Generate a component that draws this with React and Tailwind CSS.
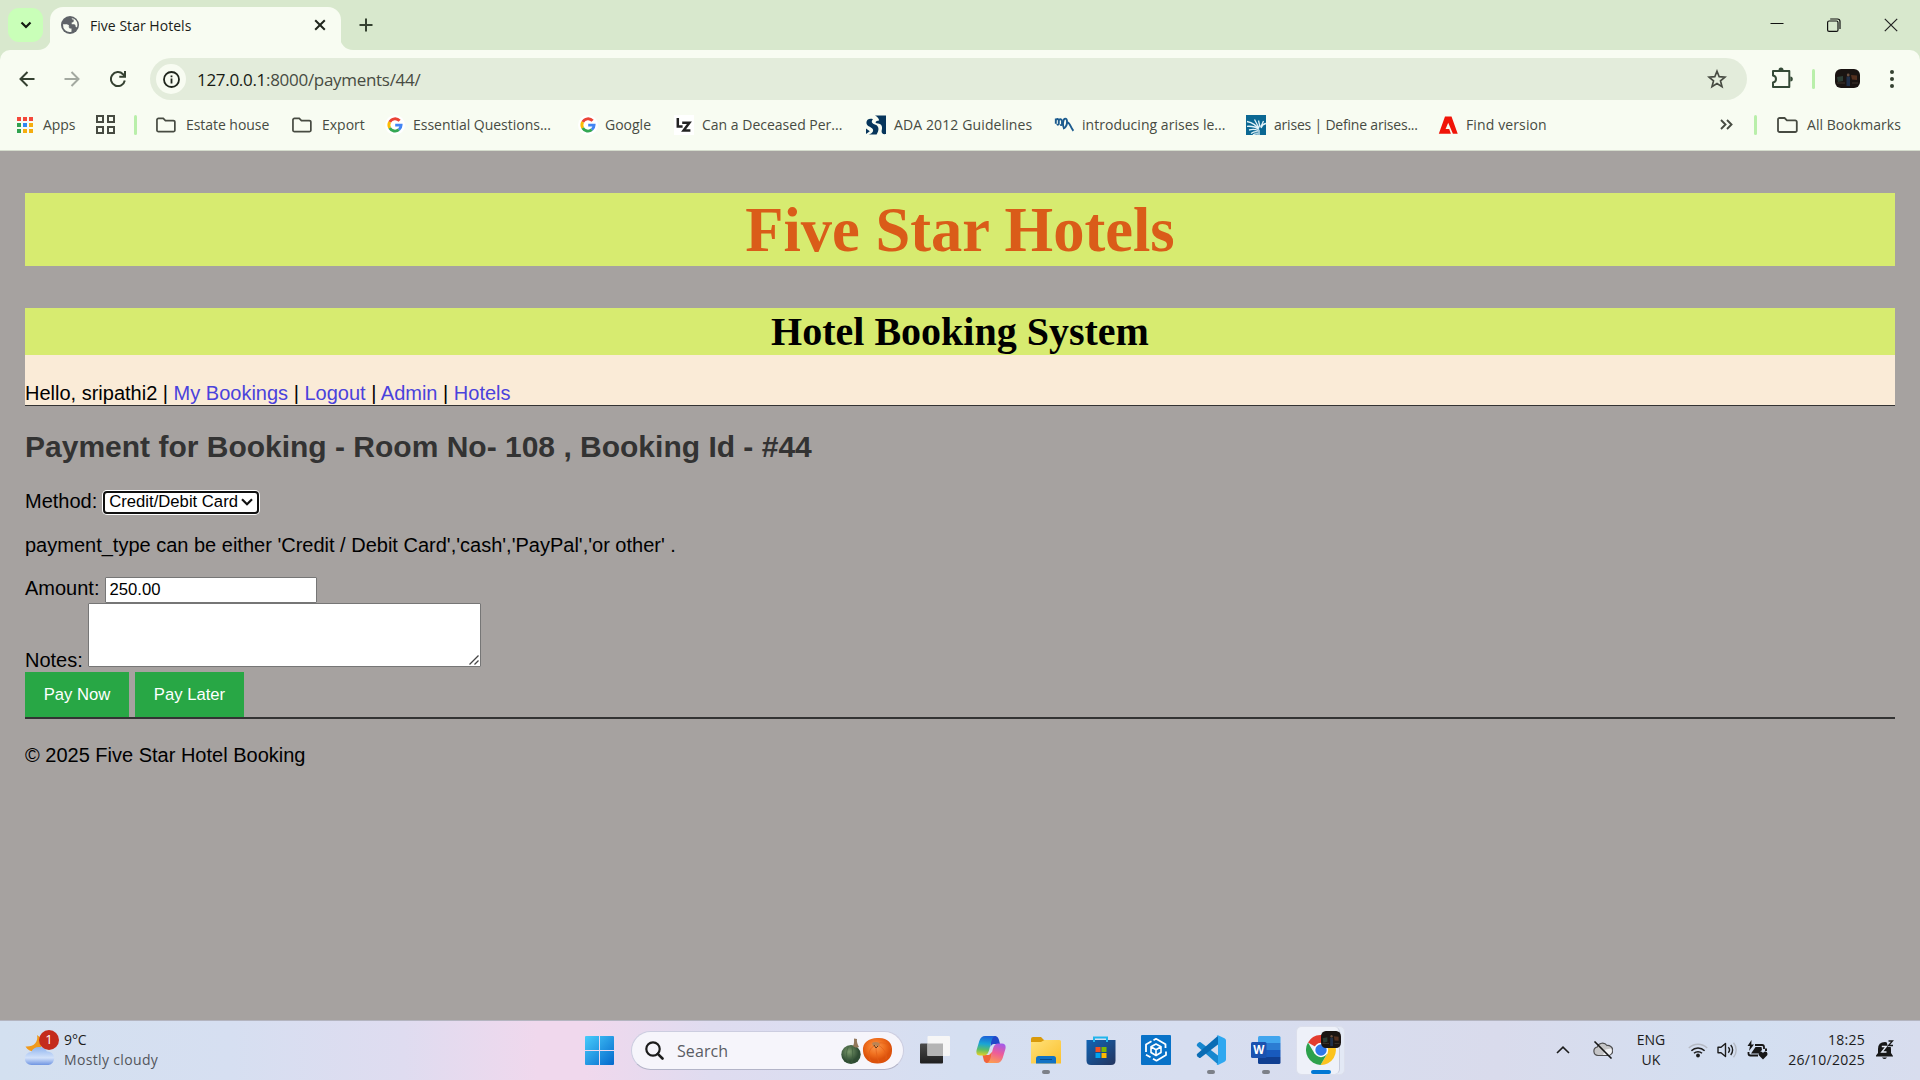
import React from "react";

const ui = "font-['Open_Sans','Noto_Sans',sans-serif]";

function Folder() {
  return (
    <svg width="21" height="16" viewBox="0 0 21 16" fill="none" stroke="#474b42" strokeWidth="1.8">
      <path d="M1 2.6A1.6 1.6 0 0 1 2.6 1H7.6L9.9 3.3H18.2A1.6 1.6 0 0 1 19.8 4.9V13.4A1.6 1.6 0 0 1 18.2 15H2.6A1.6 1.6 0 0 1 1 13.4Z" />
    </svg>
  );
}

function GoogleG() {
  return (
    <svg width="20" height="20" viewBox="0 0 20 20">
      <circle cx="10" cy="10" r="10" fill="#fff" />
      <g fill="none" strokeWidth="2.9">
        <path d="M14.6 5.8A6.1 6.1 0 0 0 4.7 7" stroke="#ea4335" />
        <path d="M4.7 7A6.1 6.1 0 0 0 4.7 13" stroke="#fbbc05" />
        <path d="M4.7 13A6.1 6.1 0 0 0 13.9 14.7" stroke="#34a853" />
        <path d="M13.9 14.7A6 6 0 0 0 16.1 10.1H10.2" stroke="#4285f4" />
      </g>
    </svg>
  );
}

function LzIcon() {
  return (
    <svg width="20" height="20" viewBox="0 0 20 20">
      <rect width="20" height="20" fill="#fff" />
      <path d="M3.8 3V11.6H8.6M8.2 7.8H15.4L9.6 15.4H16.4" fill="none" stroke="#222" strokeWidth="2.5" />
    </svg>
  );
}

function AdaIcon() {
  return (
    <svg width="20" height="20" viewBox="0 0 20 20" fill="#06355b">
      <path d="M9 .4H20V19C17 19.600 15.400 18.500 15.600 16C17 11.500 15.500 9 12 8.600C8 8.500 9.500 5.500 13.200 5.600C12.800 3 11.500 1.800 9 .4Z" />
      <path d="M.4 8C.2 4.600 3.500 3 7 4.200C4.800 6.500 5.700 8.500 9.500 9.800C13 11 13.500 15 10.600 19.600H2.500C5.500 18.800 8 16.500 6.800 14.200C5.200 11.500 1 12 .4 8Z" />
      <path d="M0 13.400L3.800 16.200L0 19Z" />
    </svg>
  );
}

function MhIcon() {
  return (
    <svg width="20" height="20" viewBox="0 0 20 20" fill="none" stroke="#1c5b8e" strokeWidth="1.900">
      <path d="M1.800 3.500V8.800M2 4.800C3.500 3.400 4.800 4 4.800 5.500V8.500C4.600 10.300 3.200 10 3.400 8.800M4.800 5.200C6.500 3.500 8 4.200 8 6V9C8 10.500 6.600 10.500 6.600 9.300" />
      <path d="M9.800 12.800C8.300 10 9 3.600 11.300 3.600C13.600 3.600 13.500 9 11.800 11.600C11 13 10 13.500 9 13.500M13.600 7.500C16 7.800 16.500 12.500 19.400 15.800" />
    </svg>
  );
}

function ArisesIcon() {
  return (
    <svg width="20" height="20" viewBox="0 0 20 20">
      <rect width="20" height="20" fill="#0b6893" />
      <g stroke="#e2f2f8" strokeWidth="1.300" fill="none">
        <path d="M13 20V15M13 14.500C10 9.500 6 7.500 1 6.500M13 14.500C10 12 5 11 1 11.300M12 15.500C9 14 5 14.500 3 15M12 17C9 16 7 17 5 18.500M13 13L8.500 4.500M14 12L12.500 5.500M15 11.500L17.500 6M15 13C16 10 17.500 9 20 8.500M12 19C9 18.500 8 19 7 20" />
      </g>
    </svg>
  );
}

function AdobeIcon() {
  return (
    <svg width="20" height="20" viewBox="0 0 20 20">
      <path d="M7 1.500H13.500L19.700 18.700H14.900L10.200 7.800L7.600 14H11.200L12.900 18.700H.8Z" fill="#f01408" />
    </svg>
  );
}

function Bookmark({ icon, label, box, gap = "gap-2", text = "" }) {
  return (
    <div className={`flex shrink-0 items-center whitespace-nowrap ${box} ${gap}`}>
      <span className="flex w-5 shrink-0 justify-center">{icon}</span>
      <span className={text}>{label}</span>
    </div>
  );
}

function TabStrip() {
  return (
    <div className="flex h-[50px] items-end bg-[#d8e8cd]">
      <div className="mb-2 ml-2 flex h-[34px] w-[35px] items-center justify-center rounded-[11px] bg-[#c9ffb8]">
        <svg width="12" height="8" viewBox="0 0 12 8" fill="none" stroke="#131a10" strokeWidth="2.200"><path d="M1.500 1.500L6 6L10.500 1.500" /></svg>
      </div>
      <svg width="13" height="13" viewBox="0 0 13 13" className="-mr-px ml-[-5px]"><path d="M13 0V13H0A13 13 0 0 0 13 0Z" fill="#f8fcf2" /></svg>
      <div className="flex h-[43px] w-[291px] items-center rounded-t-[13px] bg-[#f8fcf2] pl-[11px] pr-[15px] pb-[7px]">
        <svg width="18" height="18" viewBox="0 0 18 18">
          <circle cx="9" cy="9" r="9" fill="#5f6368" />
          <path d="M2 8.300H5.800Q8.300 8.500 8.300 10.800H6.700Q8.300 11 8.700 12.500H10.500V15.800Q7 16.800 4.200 14.300Q1.700 12 2 8.300ZM9 2H11.200V3.600H12.700V5.200Q12.500 6.600 10.700 6.600V8.300H13.200Q15 8.500 14.500 10.500L16 11.500Q17.500 5.500 13.300 3.100Q10.800 1.500 9 2Z" fill="#f8fcf2" />
        </svg>
        <span className="ml-[11px] mt-px flex-1 text-[14px] tracking-[0.03px] text-[#1b1d19]">Five Star Hotels</span>
        <svg width="12" height="12" viewBox="0 0 12 12" stroke="#20261d" strokeWidth="2"><path d="M1.200 1.200L10.800 10.800M10.800 1.200L1.200 10.800" /></svg>
      </div>
      <svg width="13" height="13" viewBox="0 0 13 13" className="-ml-px"><path d="M0 0V13H13A13 13 0 0 1 0 0Z" fill="#f8fcf2" /></svg>
      <svg width="14" height="14" viewBox="0 0 14 14" stroke="#354131" strokeWidth="2" className="mb-[18px] ml-[6px]"><path d="M7 .5V13.500M.5 7H13.500" /></svg>
      <div className="mb-[18px] ml-auto flex items-center gap-[43px] pr-[22px]">
        <svg width="14" height="14" viewBox="0 0 14 14" stroke="#111" strokeWidth="1"><path d="M.5 5.500H13.500" /></svg>
        <svg width="14" height="14" viewBox="0 0 14 14" fill="none" stroke="#111" strokeWidth="1.200"><rect x=".6" y="3" width="10.400" height="10.400" rx="1.500" /><path d="M3.200 1H10.500Q13 1 13 3.500V11" /></svg>
        <svg width="14" height="14" viewBox="0 0 14 14" stroke="#222" strokeWidth="1.200"><path d="M.8 .8L13.200 13.200M13.200 .8L.8 13.200" /></svg>
      </div>
    </div>
  );
}

function Photo({ className }) {
  return (
    <svg viewBox="0 0 25 19" preserveAspectRatio="none" className={className}>
      <rect width="25" height="19" rx="6" fill="#1a1412" />
      <path d="M2 8L8 7V12L3 13Z" fill="#2c3d35" />
      <path d="M16 6L22 6.500V11L17 10.500Z" fill="#54301f" />
      <path d="M11.500 7.500H15V17H11.500Z" fill="#1f2f4a" />
      <circle cx="13.200" cy="6" r="1.400" fill="#6b5040" />
      <path d="M2 14H10M17 14H23" stroke="#3f352d" />
    </svg>
  );
}

function Toolbar() {
  return (
    <div className="bg-[#d8e8cd]">
      <div className="flex h-[59px] items-center rounded-t-[10px] bg-[#f8fcf2]">
        <svg width="16" height="16" viewBox="0 0 16 16" fill="none" stroke="#354131" strokeWidth="2" className="mb-px ml-[19px]"><path d="M15.500 8H2M8.500 1L1.500 8L8.500 15" /></svg>
        <svg width="16" height="16" viewBox="0 0 16 16" fill="none" stroke="#a3a9a0" strokeWidth="2" className="mb-px ml-[29px]"><path d="M.5 8H14M7.500 1L14.500 8L7.500 15" /></svg>
        <svg width="16" height="16" viewBox="0 0 16 16" fill="none" stroke="#354131" strokeWidth="2" className="mb-px ml-[30px]"><path d="M14.800 9.500A7 7 0 1 1 13 3.200L14 4.400M15 0V5.700H9.300" /></svg>
        <div className="ml-[24px] flex h-[42px] w-[1597px] items-center rounded-full bg-[#e3ecdb] pl-[6px] pr-[20px]">
          <span className="flex size-[30px] items-center justify-center rounded-full bg-[#f8fcf2]">
            <svg width="17" height="17" viewBox="0 0 17 17" fill="none" stroke="#20261d" strokeWidth="1.800"><circle cx="8.500" cy="8.500" r="7.500" /><path d="M8.500 7.500V12.500M8.500 4.400V6.200" /></svg>
          </span>
          <span className="ml-[11px] flex-1 text-[17px] tracking-[-0.3px] text-[#474b42]"><span className="text-[#171a14]">127.0.0.1</span>:8000/payments/44/</span>
          <svg width="20" height="20" viewBox="0 0 20 20" fill="none" stroke="#474b42" strokeWidth="1.700"><path d="M10 2.200L12.200 7.700L18 8.100L13.500 11.900L15 17.600L10 14.500L5 17.600L6.500 11.900L2 8.100L7.800 7.700Z" /></svg>
        </div>
        <svg width="22" height="22" viewBox="0 0 22 22" fill="none" stroke="#354a37" strokeWidth="2" className="mb-[2px] ml-6"><path d="M2 4H18.300V20H2V15.500C6 14.800 6 9.300 2 8.500Z" strokeLinejoin="round" /><path d="M7.500 3A2.500 2.500 0 0 1 12.500 3ZM19.300 9.500A2.500 2.500 0 0 1 19.300 14.500Z" fill="#354a37" stroke="none" /></svg>
        <span className="ml-[19px] h-5 w-[3px] rounded bg-[#b9efaa]" />
        <Photo className="mb-px ml-5 h-[19px] w-[25px]" />
        <svg width="4" height="18" viewBox="0 0 4 18" fill="#354131" className="mb-px ml-[30px]"><circle cx="2" cy="2" r="2" /><circle cx="2" cy="9" r="2" /><circle cx="2" cy="16" r="2" /></svg>
      </div>
    </div>
  );
}

const appColors = ["#f4483a", "#f4483a", "#f4483a", "#30a350", "#2e88f0", "#f5ad0f", "#30a350", "#f5ad0f", "#f5ad0f"];

function BookmarksBar() {
  return (
    <div className="flex h-[42px] items-center border-b border-[#d5dccd] bg-[#f8fcf2] pb-[9px] text-[14px] text-[#474b42]">
      <div className="ml-[17px] grid grid-cols-3 gap-[2px]">
        {appColors.map((c, i) => <span key={i} className="size-1" style={{ backgroundColor: c }} />)}
      </div>
      <span className="ml-[10px] w-[53px] tracking-[-0.1px]">Apps</span>
      <div className="grid grid-cols-2 gap-[3px]">
        {[0, 1, 2, 3].map((i) => <span key={i} className="size-[8px] border-2 border-[#474b42]" />)}
      </div>
      <span className="ml-[19px] h-5 w-[3px] rounded bg-[#b9efaa]" />
      <div className="ml-[19px] flex items-center">
        <Bookmark icon={<Folder />} label="Estate house" box="w-[136px]" gap="gap-[10px]" text="tracking-[-0.05px]" />
        <Bookmark icon={<Folder />} label="Export" box="w-[93px]" gap="gap-[10px]" />
        <Bookmark icon={<GoogleG />} label="Essential Questions..." box="w-[193px]" text="tracking-[-0.02px]" />
        <Bookmark icon={<GoogleG />} label="Google" box="w-[96px]" gap="gap-[7px]" />
        <Bookmark icon={<LzIcon />} label="Can a Deceased Per..." box="w-[192px]" />
        <Bookmark icon={<AdaIcon />} label="ADA 2012 Guidelines" box="w-[188px]" text="tracking-[0.12px]" />
        <Bookmark icon={<MhIcon />} label="introducing arises le..." box="w-[192px]" text="tracking-[0.03px]" />
        <Bookmark icon={<ArisesIcon />} label="arises | Define arises..." box="w-[192px]" text="tracking-[-0.2px]" />
        <Bookmark icon={<AdobeIcon />} label="Find version" box="w-[120px]" text="tracking-[0.12px]" />
      </div>
      <svg width="13" height="11" viewBox="0 0 13 11" fill="none" stroke="#474b42" strokeWidth="1.900" className="ml-auto"><path d="M1 1L5.500 5.500L1 10M7 1L11.500 5.500L7 10" /></svg>
      <span className="ml-[21px] mr-[20px] h-5 w-[3px] rounded bg-[#b9efaa]" />
      <Folder />
      <span className="ml-[9px] w-[113px] whitespace-nowrap tracking-[0.05px]">All Bookmarks</span>
    </div>
  );
}

function HotelPage() {
  return (
    <main className="h-[870px] bg-[#a6a2a0] px-[25px] pt-[42px] font-['Liberation_Sans',Arial,sans-serif] text-[20px] leading-6 text-black">
      <h1 className="h-[73px] bg-[#d7eb70] text-center font-['Liberation_Serif',serif] text-[62.5px] font-bold leading-[75px] text-[#da5c19]">Five Star Hotels</h1>
      <header className="mt-[42px] h-[98px] border-b border-[#333] bg-[#faebd7]">
        <h2 className="h-[47px] bg-[#d7eb70] text-center font-['Liberation_Serif',serif] text-[40px] font-bold leading-[47px]">Hotel Booking System</h2>
        <p className="pt-[26px]">
          Hello, sripathi2 | <a className="text-[#4a42dc]">My Bookings</a> | <a className="text-[#4a42dc]">Logout</a> | <a className="text-[#4a42dc]">Admin</a> | <a className="text-[#4a42dc]">Hotels</a>
        </p>
      </header>
      <h2 className="mt-[23px] text-[30px] font-bold leading-[36px] text-[#333]">Payment for Booking - Room No- 108 , Booking Id - #44</h2>
      <div className="mt-[24px] flex h-6 items-start">
        <span>Method:</span>
        <div className="ml-[6px] mt-[2px] flex h-[23px] w-[156px] items-center rounded-[4px] border-2 border-[#101010] bg-white pl-[4px] pr-[4px] text-[16.67px] leading-5 ring-1 ring-white">
          <span className="whitespace-nowrap">Credit/Debit Card</span>
          <svg width="12" height="8" viewBox="0 0 12 8" fill="none" stroke="#111" strokeWidth="2.200" className="ml-auto"><path d="M1 1.200L6 6.200L11 1.200" /></svg>
        </div>
      </div>
      <p className="mt-[20px]">payment_type can be either 'Credit / Debit Card','cash','PayPal','or other' .</p>
      <form>
        <div className="mt-[19px] flex h-[27px] items-start">
          <label>Amount:</label>
          <input readOnly value="250.00" className="ml-[6px] mt-px h-[26px] w-[212px] rounded-[1px] border border-[#767676] bg-white px-[3px] text-[16.67px] outline-none" />
        </div>
        <div className="flex h-[69px] items-start">
          <label className="mt-[45px]">Notes:</label>
          <div className="relative ml-[5px] h-[64px]">
            <textarea readOnly className="block h-[64px] w-[393px] resize-none rounded-[1px] border border-[#767676] bg-white outline-none" />
            <svg width="10" height="10" viewBox="0 0 10 10" stroke="#444" strokeWidth="1.300" className="absolute bottom-[2px] right-[2px]"><path d="M.5 9.500L9.500 .5M5.500 9.500L9.500 5.500" /></svg>
          </div>
        </div>
        <div className="flex gap-[6px] text-[16.67px] text-white">
          <button type="button" className="h-[45px] w-[104px] bg-[#28a745] pt-px">Pay Now</button>
          <button type="button" className="h-[45px] w-[109px] bg-[#28a745] pt-px">Pay Later</button>
        </div>
      </form>
      <footer className="border-t-2 border-[#333] pt-[24px]">© 2025 Five Star Hotel Booking</footer>
    </main>
  );
}

function Weather() {
  return (
    <div className="relative mb-1 ml-[25px] h-[36px] w-[30px]">
      <svg width="30" height="36" viewBox="0 0 30 36">
        <defs>
          <linearGradient id="cloud" x1="0" y1="0" x2="0" y2="1"><stop offset="0" stopColor="#8fb4ee" /><stop offset=".6" stopColor="#d3e2fa" /><stop offset="1" stopColor="#6f95e2" /></linearGradient>
        </defs>
        <path d="M12 4C13.500 11 9 16 .5 15.500C3 20 8 21.500 13 20L20 10Z" fill="#f09a1c" />
        <path d="M6.500 34A6.500 6.500 0 0 1 6.200 21A9 9 0 0 1 22 20.500A6.800 6.800 0 0 1 23.500 34Z" fill="url(#cloud)" />
      </svg>
      <span className="absolute left-[14px] top-[-1px] flex size-5 items-center justify-center rounded-full bg-[#c42b1c] text-[13px] leading-none text-white">1</span>
    </div>
  );
}

function Pumpkins() {
  return (
    <svg width="52" height="28" viewBox="0 0 52 28">
      <defs>
        <radialGradient id="pk" cx=".45" cy=".35"><stop offset="0" stopColor="#fb9a50" /><stop offset=".6" stopColor="#f0701f" /><stop offset="1" stopColor="#dc520c" /></radialGradient>
        <radialGradient id="gp" cx=".4" cy=".35"><stop offset="0" stopColor="#7b9a6c" /><stop offset="1" stopColor="#2f4c33" /></radialGradient>
      </defs>
      <ellipse cx="10" cy="17.500" rx="9.700" ry="9.500" fill="url(#gp)" />
      <path d="M12 9C13.500 6 13 4 13 1.500L16 2C15.500 5 16.500 7 18 10C15 11 13.500 10.500 12 9Z" fill="#93785c" />
      <path d="M8 9C4.500 14 5 21 8 26.500M11 10C12 15 12 21 10.500 26.500" stroke="#3f5f3e" strokeWidth=".7" fill="none" />
      <path d="M22 14C21 6 28 1 36 1C46 0 52 6 51 14C51 22 44 26.500 37 26.500C29 27 22.500 22 22 14Z" fill="url(#pk)" />
      <path d="M33 9C27 12 27 20 30 24.500M35 10C35 15 36 21 38 25.500M37 8C43 11 46 17 45 22M38 6C44 5 48 8 50 12" stroke="#e2601a" strokeWidth=".7" fill="none" />
      <path d="M31 6C34 4 38 5 39 7L37 10L34 8L32 9Z" fill="#b98455" />
      <path d="M33 8L35 11L37 9" stroke="#5d3a20" fill="none" />
    </svg>
  );
}

function AppSlot({ children, running }) {
  return (
    <div className="flex h-12 w-[30px] shrink-0 flex-col items-center pt-[8px]">
      <div className="h-[30px]">{children}</div>
      {running && <span className="mt-[5px] h-1 w-2 rounded-full bg-[#7c8088]" />}
    </div>
  );
}

function CopilotIcon() {
  return (
    <svg width="30" height="30" viewBox="0 0 30 30">
      <defs>
        <linearGradient id="c1" x1=".4" y1="0" x2=".3" y2="1"><stop offset="0" stopColor="#1b62d8" /><stop offset=".4" stopColor="#1aa5d5" /><stop offset=".7" stopColor="#5cbd68" /><stop offset="1" stopColor="#e3cf25" /></linearGradient>
        <linearGradient id="c2" x1=".7" y1="0" x2=".4" y2="1"><stop offset="0" stopColor="#a45be8" /><stop offset=".5" stopColor="#ee5c98" /><stop offset="1" stopColor="#fb9a55" /></linearGradient>
      </defs>
      <path d="M15 1H19.500Q22 1.500 23 5L24 9H18Q15.500 9 14.500 12Z" fill="#2147c8" />
      <path d="M15 28H10.500Q8 27.500 7.500 24L6.500 20H13L16 17Z" fill="#f1633b" />
      <path d="M9 1H19Q16.500 2 15.500 6L13 15.500Q11.500 20.500 8 20.500H4Q-.5 20.500 .6 15L3.300 6Q5 1 9 1Z" fill="url(#c1)" />
      <path d="M21 28H11Q13.500 27 14.500 23L17 13.500Q18.500 8.500 22 8.500H26Q30.500 8.500 29.400 14L26.700 23Q25 28 21 28Z" fill="url(#c2)" />
    </svg>
  );
}

function ExplorerIcon() {
  return (
    <svg width="30" height="30" viewBox="0 0 30 30">
      <defs><linearGradient id="fy" x1="0" y1="0" x2="1" y2="1"><stop offset="0" stopColor="#ffe17a" /><stop offset="1" stopColor="#fbc02c" /></linearGradient></defs>
      <path d="M0 4Q0 2 2 2H10L13 5H18V12H0Z" fill="#d99a0b" />
      <path d="M0 7H10L13.500 5H28.500Q30 5 30 6.500V28.500H0Z" fill="url(#fy)" />
      <path d="M5 28.500V23.500Q5 21 7.500 21H22.500Q25 21 25 23.500V28.500Z" fill="#1272c4" />
      <path d="M9 24.500H21" stroke="#0a4c8c" />
    </svg>
  );
}

function StoreIcon() {
  return (
    <svg width="30" height="30" viewBox="0 0 30 30">
      <defs><linearGradient id="st" x1="0" y1="0" x2="1" y2="1"><stop offset="0" stopColor="#1164b4" /><stop offset="1" stopColor="#23345e" /></linearGradient></defs>
      <path d="M8 7V2.500H21V7" fill="none" stroke="#22b5ec" strokeWidth="2" />
      <path d="M.5 5H29.500V25.500Q29.500 30 25 30H5Q.5 30 .5 25.500Z" fill="url(#st)" />
      <path d="M8 5V7M21 5V7" stroke="#22b5ec" strokeWidth="2" />
      <path d="M9.500 12H14.500V17H9.500Z" fill="#f25022" /><path d="M15.500 12H20.500V17H15.500Z" fill="#7fba00" />
      <path d="M9.500 18H14.500V23H9.500Z" fill="#00a4ef" /><path d="M15.500 18H20.500V23H15.500Z" fill="#ffb900" />
    </svg>
  );
}

function CubeIcon() {
  return (
    <svg width="30" height="30" viewBox="0 0 30 30">
      <rect width="30" height="30" rx="1" fill="#0872c8" />
      <g fill="none" stroke="#fff" strokeLinejoin="round">
        <path d="M5 17V9.500L10.500 6.300M12.500 5.200L15 3.800L24.500 9.300V13M25 16.500V20L15.500 25.700L12 23.700M9.500 22.200L5 19.700" strokeWidth="1.800" />
        <path d="M15 9L20 11.800V17.500L15 20.500L10 17.500V11.800ZM10 11.800L15 14.700L20 11.800M15 14.700V20.500" strokeWidth="1.600" />
      </g>
    </svg>
  );
}

function CodeIcon() {
  return (
    <svg width="30" height="30" viewBox="0 0 30 30">
      <path d="M1.300 8.800L3 7.300Q3.800 6.800 4.600 7.300L22 20.500V29.500L1 11Q.2 10 1.300 8.800Z" fill="#1787cf" />
      <path d="M1.300 21.200L3 22.700Q3.800 23.200 4.600 22.700L22 9.500V.8L1 19Q.2 20 1.300 21.200Z" fill="#0a6cb4" />
      <path d="M22 .2L28.500 3.200Q30 4 30 5.500V24.500Q30 26 28.500 26.800L22 29.900Q21 30 20.500 29.300Q22 29.500 22 27.500V2.500Q22 .5 20.500 .8Z" fill="#2fa8f0" />
    </svg>
  );
}

function WordIcon() {
  return (
    <svg width="30" height="30" viewBox="0 0 30 30">
      <path d="M7 2.500Q7 1 8.500 1H28Q29.500 1 29.500 2.500V8H7Z" fill="#41a5ee" />
      <path d="M7 8H29.500V15H7Z" fill="#2b7cd3" /><path d="M7 15H29.500V22H7Z" fill="#185abd" />
      <path d="M7 22H29.500V27.500Q29.500 29 28 29H8.500Q7 29 7 27.500Z" fill="#103f91" />
      <rect y="7" width="15.500" height="16" rx="1.500" fill="#1a52b0" />
      <text x="7.700" y="19" textAnchor="middle" fontFamily="Open Sans" fontWeight="700" fontSize="11.500" fill="#fff">W</text>
    </svg>
  );
}

function ChromeIcon() {
  return (
    <svg width="30" height="30" viewBox="0 0 30 30">
      <path d="M15 15L2 7.500A15 15 0 0 1 28 7.500Z" fill="#e33b2e" />
      <path d="M15 8H28.200A15 15 0 0 1 14.500 30L21.500 18.500Z" fill="#fcc31e" />
      <path d="M2 7.500A15 15 0 0 0 14.500 30L21.300 18.500L15 21L8.500 18.500Z" fill="#2da14c" />
      <circle cx="15" cy="15" r="7.200" fill="#fff" /><circle cx="15" cy="15" r="5.700" fill="#2f78ea" />
    </svg>
  );
}

function Tray() {
  return (
    <div className="mb-px ml-auto flex items-center">
      <svg width="14" height="8" viewBox="0 0 14 8" fill="none" stroke="#1c1c1c" strokeWidth="1.600"><path d="M1 7L7 1.200L13 7" /></svg>
      <svg width="20" height="18" viewBox="0 0 20 18" className="ml-[23px]">
        <path d="M5 14.500A4.300 4.300 0 0 1 4.300 6A5.500 5.500 0 0 1 14 4.500A5 5 0 0 1 15.500 14.500Z" fill="#c5c5c7" stroke="#4e4e50" strokeWidth="1.200" />
        <path d="M10 14L12.500 8.500L18 7.500Q20 12 16 14Z" fill="#f1f1f3" />
        <path d="M1.500 .5L18.500 17.500" stroke="#151515" strokeWidth="1.600" />
      </svg>
      <div className="ml-[18px] w-[40px] text-center text-[14px] leading-5">ENG<br />UK</div>
      <svg width="20" height="16" viewBox="0 0 20 16" fill="none" className="ml-[17px]">
        <path d="M.8 6A13 13 0 0 1 19.200 6" stroke="#b5bac4" strokeWidth="1.400" />
        <path d="M3.400 8.700A9.300 9.300 0 0 1 16.600 8.700M6 11.300A5.700 5.700 0 0 1 14 11.300" stroke="#1c1c1c" strokeWidth="1.500" />
        <circle cx="10" cy="13.500" r="1.900" fill="#1c1c1c" />
      </svg>
      <svg width="21" height="18" viewBox="0 0 21 18" fill="none" stroke="#1c1c1c" strokeWidth="1.400" strokeLinejoin="round" className="ml-[9px]">
        <path d="M1 6.300H4L8.500 2.500V15.500L4 11.700H1Z" /><path d="M11.300 6.300A4 4 0 0 1 11.300 11.700M13.700 4A7.500 7.500 0 0 1 13.700 14" /><path d="M16.500 1.800A11 11 0 0 1 16.500 16.200" stroke="#b5bac4" />
      </svg>
      <svg width="21" height="20" viewBox="0 0 21 20" className="ml-[9px]">
        <path d="M8 5H15Q17 5 17 7V9" fill="none" stroke="#171717" strokeWidth="1.800" />
        <path d="M1.500 12V13.500Q1.500 15.500 3.500 15.500H11" fill="none" stroke="#171717" strokeWidth="1.800" />
        <path d="M18 8.500H20V11H18Z" fill="#171717" />
        <path d="M8.500 7H14.500L15 10L11.500 13.500H4Z" fill="#171717" />
        <path d="M4.500 0L.5 6H3L2 11L7 4.500H4.300Z" fill="#171717" />
        <path d="M16 19.500L11.800 15.200Q10.800 12 13.500 11.500Q15.200 11.300 16 13Q16.800 11.300 18.500 11.500Q21.200 12 20.200 15.200Z" fill="#171717" />
      </svg>
      <div className="ml-[9px] w-[88px] whitespace-nowrap text-right text-[14px] leading-5 tracking-[0.25px]">18:25<br />26/10/2025</div>
      <svg width="18" height="20" viewBox="0 0 18 20" className="ml-[11px] mr-[26px]">
        <path d="M2 9Q2 2 9 2Q15 2 15 9V13L17 16V16.500H0V15.500L2 13Z" fill="#171717" />
        <path d="M6 17.500H11Q8.500 20.500 6 17.500Z" fill="#171717" />
        <path d="M10 0H18V7H12Z" fill="#d6deef" />
        <path d="M12.500 1H16.500L12.500 5.500H17" fill="none" stroke="#171717" strokeWidth="1.300" />
        <path d="M5.800 6.500H10.300L5.800 12H10.500" fill="none" stroke="#e5eaf5" strokeWidth="1.400" />
      </svg>
    </div>
  );
}

function Taskbar() {
  return (
    <div className="flex h-[60px] items-center border-t border-[#b4b5c0] bg-[linear-gradient(90deg,#d3e0f0_0%,#d6dff1_12%,#dfdcf0_21%,#f0d8ed_28%,#f0d8ed_30.500%,#dfdcf0_37%,#d5dff1_50%,#d7def0_62%,#d9dbec_78%,#d3dff1_91%,#d8ddee_100%)] text-[#1c1c1c]">
      <div className="flex w-[585px] items-center">
        <Weather />
        <div className="mb-[2px] ml-[9px] text-[14px] leading-5"><div className="tracking-[-0.1px]">9°C</div><div className="tracking-[0.35px] text-[#53565c]">Mostly cloudy</div></div>
      </div>
      <svg width="29" height="29" viewBox="0 0 29 29">
        <defs><linearGradient id="win" gradientUnits="userSpaceOnUse" x1="0" y1="0" x2="29" y2="29"><stop offset="0" stopColor="#48ccfb" /><stop offset="1" stopColor="#0468cc" /></linearGradient></defs>
        <path d="M0 1Q0 0 1 0H14V14H0ZM15 0H28Q29 0 29 1V14H15ZM0 15H14V29H1Q0 29 0 28ZM15 15H29V28Q29 29 28 29H15Z" fill="url(#win)" />
      </svg>
      <div className="ml-[17px] mr-px flex h-[39px] w-[273px] items-center rounded-full border border-[#cccde0] border-b-[#b3b4c8] bg-[#f6f5fb] pl-[13px] pr-[10px]">
        <svg width="19" height="19" viewBox="0 0 19 19" fill="none" stroke="#1c1c1c" strokeWidth="2.200"><circle cx="8" cy="8" r="6.700" /><path d="M12.800 12.800L17.500 17.500" strokeWidth="2.600" strokeLinecap="round" /></svg>
        <span className="ml-[13px] flex-1 text-[16px] tracking-[0.1px] text-[#5a5c63]">Search</span>
        <Pumpkins />
      </div>
      <svg width="30" height="30" viewBox="0 0 30 30" className="mb-px ml-[15px]">
        <defs><linearGradient id="tv" x1="0" y1="0" x2="0" y2="1"><stop offset="0" stopColor="#4b4b4b" /><stop offset="1" stopColor="#1f1f1f" /></linearGradient></defs>
        <rect y="8.500" width="23" height="20" rx="1" fill="url(#tv)" /><rect x="7.500" y="1" width="22.500" height="20" rx="1" fill="#f6f6f6" /><rect x="7.500" y="8.500" width="15.500" height="12.500" fill="#b4b4b4" />
      </svg>
      <div className="ml-[26px] flex gap-[25px]">
        <AppSlot><CopilotIcon /></AppSlot>
        <AppSlot running><ExplorerIcon /></AppSlot>
        <AppSlot><StoreIcon /></AppSlot>
        <AppSlot><CubeIcon /></AppSlot>
        <AppSlot running><CodeIcon /></AppSlot>
        <AppSlot running><WordIcon /></AppSlot>
      </div>
      <div className="mb-px ml-[15px] flex h-[49px] w-[49px] rounded-[5px] border border-[#dcdfec] bg-[#e3e9f5]">
        <div className="relative flex w-[43px] flex-col items-center rounded-[5px] border-r border-[#c6cbdc] bg-[#eef1f9] pl-[5px] pt-2">
          <ChromeIcon />
          <span className="mt-[5px] h-1 w-5 rounded-full bg-[#0078d4]" />
          <Photo className="absolute left-[24px] top-[4px] h-[17px] w-[20px]" />
        </div>
      </div>
      <Tray />
    </div>
  );
}

export default function App() {
  return (
    <div className={`flex h-[1080px] w-[1920px] flex-col overflow-hidden ${ui}`}>
      <TabStrip />
      <Toolbar />
      <BookmarksBar />
      <HotelPage />
      <Taskbar />
    </div>
  );
}
